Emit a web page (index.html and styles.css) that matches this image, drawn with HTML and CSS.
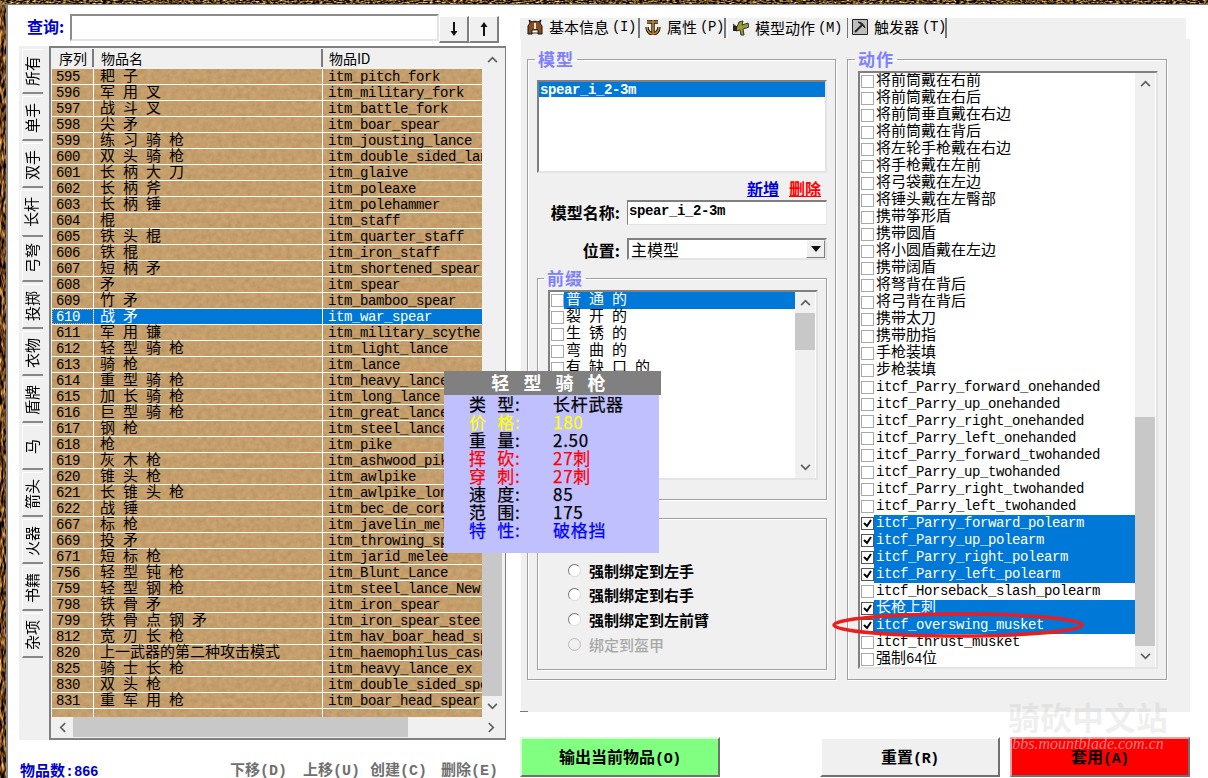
FILE: index.html
```html
<!DOCTYPE html>
<html lang="zh">
<head>
<meta charset="utf-8">
<title>物品编辑器</title>
<link rel="stylesheet" href="styles.css">
</head>
<body>
<div class="app">
  <div class="topstrip"></div>
  <div class="body">
    <div class="leftstrip"></div>
    <div class="leftcol">
      <div class="query">
        <label class="q-label">查询:</label>
        <div class="q-input"></div>
        <button class="q-btn"><svg viewBox="0 0 10 16"><path d="M5 1V11" class="a-l"/><path d="M1.5 10H8.5L5 15Z"/></svg></button>
        <button class="q-btn"><svg viewBox="0 0 10 16"><path d="M5 5V15" class="a-l"/><path d="M1.5 6H8.5L5 1Z"/></svg></button>
      </div>
      <div class="listarea">
        <div class="vtabs">
          <div class="vtab"><span>所有</span></div>
          <div class="vtab"><span>单手</span></div>
          <div class="vtab"><span>双手</span></div>
          <div class="vtab on"><span>长杆</span></div>
          <div class="vtab"><span>弓弩</span></div>
          <div class="vtab"><span>投掷</span></div>
          <div class="vtab"><span>衣物</span></div>
          <div class="vtab"><span>盾牌</span></div>
          <div class="vtab"><span>马</span></div>
          <div class="vtab"><span>箭头</span></div>
          <div class="vtab"><span>火器</span></div>
          <div class="vtab"><span>书籍</span></div>
          <div class="vtab"><span>杂项</span></div>
        </div>
        <div class="tbox">
          <div class="tmain">
            <div class="thead">
              <div class="th">序列</div><div class="th">物品名</div><div class="th">物品<span class="lat">ID</span></div>
            </div>
            <div class="rows">
              <div class="row"><i>595</i><b>耙 子</b><u>itm_pitch_fork</u></div>
              <div class="row"><i>596</i><b>军 用 叉</b><u>itm_military_fork</u></div>
              <div class="row"><i>597</i><b>战 斗 叉</b><u>itm_battle_fork</u></div>
              <div class="row"><i>598</i><b>尖 矛</b><u>itm_boar_spear</u></div>
              <div class="row"><i>599</i><b>练 习 骑 枪</b><u>itm_jousting_lance</u></div>
              <div class="row"><i>600</i><b>双 头 骑 枪</b><u>itm_double_sided_lance</u></div>
              <div class="row"><i>601</i><b>长 柄 大 刀</b><u>itm_glaive</u></div>
              <div class="row"><i>602</i><b>长 柄 斧</b><u>itm_poleaxe</u></div>
              <div class="row"><i>603</i><b>长 柄 锤</b><u>itm_polehammer</u></div>
              <div class="row"><i>604</i><b>棍</b><u>itm_staff</u></div>
              <div class="row"><i>605</i><b>铁 头 棍</b><u>itm_quarter_staff</u></div>
              <div class="row"><i>606</i><b>铁 棍</b><u>itm_iron_staff</u></div>
              <div class="row"><i>607</i><b>短 柄 矛</b><u>itm_shortened_spear</u></div>
              <div class="row"><i>608</i><b>矛</b><u>itm_spear</u></div>
              <div class="row"><i>609</i><b>竹 矛</b><u>itm_bamboo_spear</u></div>
              <div class="row sel"><i>610</i><b>战 矛</b><u>itm_war_spear</u></div>
              <div class="row"><i>611</i><b>军 用 镰</b><u>itm_military_scythe</u></div>
              <div class="row"><i>612</i><b>轻 型 骑 枪</b><u>itm_light_lance</u></div>
              <div class="row"><i>613</i><b>骑 枪</b><u>itm_lance</u></div>
              <div class="row"><i>614</i><b>重 型 骑 枪</b><u>itm_heavy_lance</u></div>
              <div class="row"><i>615</i><b>加 长 骑 枪</b><u>itm_long_lance</u></div>
              <div class="row"><i>616</i><b>巨 型 骑 枪</b><u>itm_great_lance</u></div>
              <div class="row"><i>617</i><b>钢 枪</b><u>itm_steel_lance</u></div>
              <div class="row"><i>618</i><b>枪</b><u>itm_pike</u></div>
              <div class="row"><i>619</i><b>灰 木 枪</b><u>itm_ashwood_pike</u></div>
              <div class="row"><i>620</i><b>锥 头 枪</b><u>itm_awlpike</u></div>
              <div class="row"><i>621</i><b>长 锥 头 枪</b><u>itm_awlpike_long</u></div>
              <div class="row"><i>622</i><b>战 锤</b><u>itm_bec_de_corbin</u></div>
              <div class="row"><i>667</i><b>标 枪</b><u>itm_javelin_melee</u></div>
              <div class="row"><i>669</i><b>投 矛</b><u>itm_throwing_spear</u></div>
              <div class="row"><i>671</i><b>短 标 枪</b><u>itm_jarid_melee</u></div>
              <div class="row"><i>756</i><b>轻 型 钝 枪</b><u>itm_Blunt_Lance</u></div>
              <div class="row"><i>759</i><b>轻 型 钢 枪</b><u>itm_steel_lance_New</u></div>
              <div class="row"><i>798</i><b>铁 骨 矛</b><u>itm_iron_spear</u></div>
              <div class="row"><i>799</i><b>铁 骨 点 钢 矛</b><u>itm_iron_spear_steel</u></div>
              <div class="row"><i>812</i><b>宽 刃 长 枪</b><u>itm_hav_boar_head_spear</u></div>
              <div class="row"><i>820</i><b>上一武器的第二种攻击模式</b><u>itm_haemophilus_case</u></div>
              <div class="row"><i>825</i><b>骑 士 长 枪</b><u>itm_heavy_lance_ex</u></div>
              <div class="row"><i>830</i><b>双 头 枪</b><u>itm_double_sided_spear</u></div>
              <div class="row"><i>831</i><b>重 军 用 枪</b><u>itm_boar_head_spear</u></div>
              <div class="row"><i></i><b></b><u></u></div>
            </div>
          </div>
          <div class="vbar vbar-items">
            <div class="sb-btn"><svg class="chev" viewBox="0 0 12 8"><path d="M1 7 6 2 11 7"/></svg></div>
            <div class="sb-space"></div>
            <div class="sb-thumb"></div>
            <div class="sb-btn"><svg class="chev" viewBox="0 0 12 8"><path d="M1 1 6 6 11 1"/></svg></div>
          </div>
          <div class="hbar">
            <div class="hb-btn"><svg class="chev-h" viewBox="0 0 8 12"><path d="M7 1 2 6 7 11"/></svg></div>
            <div class="hb-thumb"></div>
            <div class="hb-space"></div>
            <div class="hb-btn"><svg class="chev-h" viewBox="0 0 8 12"><path d="M1 1 6 6 1 11"/></svg></div>
          </div>
        </div>
      </div>
      <div class="status">
        <span class="count">物品数:<span class="lat">866</span></span>
        <span class="cmds">
          <span class="cmd">下移(D)</span><span class="cmd">上移(U)</span><span class="cmd">创建(C)</span><span class="cmd">删除(E)</span>
        </span>
      </div>
    </div>

    <div class="rightcol">
      <div class="tabbar">
        <div class="tab t1"><svg class="ico" viewBox="0 0 16 16"><path d="M1 15V7L3 4 2 1 5 3C6 2 10 2 11 3L14 1 13 4 15 7V15H11V11H5V15Z" fill="#8b4a1f" stroke="#111"/><path d="M7 4H9V10H7Z" fill="#e8e0d0"/><path d="M5 11H11V14H5Z" fill="#fff" stroke="#333"/></svg>基本信息<span class="lat">(I)</span></div>
        <div class="tab t2"><svg class="ico" viewBox="0 0 16 16"><path d="M2 3H13M8 1V14M2 8C2 13 6 15 8 15S14 13 14 8" fill="none" stroke="#111" stroke-width="3.4"/><path d="M2 3H13M8 1V14M2 8C2 13 6 15 8 15S14 13 14 8" fill="none" stroke="#c98a22" stroke-width="1.6"/></svg>属性<span class="lat">(P)</span></div>
        <div class="tab t3 on"><svg class="ico" viewBox="0 0 16 16"><path d="M0 4 4 7 6 2 10 1 9 5 15 3 16 7 10 9 11 15 8 15 7 10 3 11Z" fill="#9a9a30" stroke="#333"/><path d="M0 6H4V11H0Z" fill="#222"/></svg>模型动作<span class="lat">(M)</span></div>
        <div class="tab t4"><svg class="ico" viewBox="0 0 16 16"><path d="M.5.5H15.5V15.5H.5Z" fill="#bdbdbd" stroke="#222"/><path d="M3 13 10 6" fill="none" stroke="#222" stroke-width="2"/><path d="M6 3C9 3 12 5 13 9L10 6Z" fill="#333" stroke="#222"/></svg>触发器<span class="lat">(T)</span></div>
      </div>
      <div class="panel">
        <fieldset class="group g-model">
          <legend>模型</legend>
          <div class="models lat-wide"><div class="model-sel">spear_i_2-3m</div></div>
          <div class="links"><span class="add">新増</span><span class="del">删除</span></div>
          <div class="field f-name"><label>模型名称:</label><div class="f-input">spear_i_2-3m</div></div>
          <div class="field f-pos"><label>位置:</label><div class="f-select"><span>主模型</span><span class="dd"><svg viewBox="0 0 10 6"><path d="M0 0H10L5 6Z"/></svg></span></div></div>
          <fieldset class="group g-prefix">
            <legend>前缀</legend>
            <div class="checklist prefix-list">
              <div class="cl-rows">
                <div class="cl-row sel"><span class="box"></span><span class="t sp">普 通 的</span></div>
                <div class="cl-row"><span class="box"></span><span class="t sp">裂 开 的</span></div>
                <div class="cl-row"><span class="box"></span><span class="t sp">生 锈 的</span></div>
                <div class="cl-row"><span class="box"></span><span class="t sp">弯 曲 的</span></div>
                <div class="cl-row"><span class="box"></span><span class="t sp">有 缺 口 的</span></div>
              </div>
              <div class="vbar vbar-prefix">
                <div class="sb-btn"><svg class="chev" viewBox="0 0 12 8"><path d="M1 7 6 2 11 7"/></svg></div>
                <div class="sb-thumb"></div>
                <div class="sb-space"></div>
                <div class="sb-btn"><svg class="chev" viewBox="0 0 12 8"><path d="M1 1 6 6 11 1"/></svg></div>
              </div>
            </div>
          </fieldset>
          <fieldset class="group g-bind">
            <div class="radio"><span class="dot"></span>强制绑定到左手</div>
            <div class="radio"><span class="dot"></span>强制绑定到右手</div>
            <div class="radio"><span class="dot"></span>强制绑定到左前臂</div>
            <div class="radio off"><span class="dot"></span>绑定到盔甲</div>
          </fieldset>
        </fieldset>
        <fieldset class="group g-action">
          <legend>动作</legend>
          <div class="checklist action-list">
            <div class="cl-rows">
              <div class="cl-row"><span class="box"></span><span class="t">将前筒戴在右前</span></div>
              <div class="cl-row"><span class="box"></span><span class="t">将前筒戴在右后</span></div>
              <div class="cl-row"><span class="box"></span><span class="t">将前筒垂直戴在右边</span></div>
              <div class="cl-row"><span class="box"></span><span class="t">将前筒戴在背后</span></div>
              <div class="cl-row"><span class="box"></span><span class="t">将左轮手枪戴在右边</span></div>
              <div class="cl-row"><span class="box"></span><span class="t">将手枪戴在左前</span></div>
              <div class="cl-row"><span class="box"></span><span class="t">将弓袋戴在左边</span></div>
              <div class="cl-row"><span class="box"></span><span class="t">将锤头戴在左臀部</span></div>
              <div class="cl-row"><span class="box"></span><span class="t">携带筝形盾</span></div>
              <div class="cl-row"><span class="box"></span><span class="t">携带圆盾</span></div>
              <div class="cl-row"><span class="box"></span><span class="t">将小圆盾戴在左边</span></div>
              <div class="cl-row"><span class="box"></span><span class="t">携带阔盾</span></div>
              <div class="cl-row"><span class="box"></span><span class="t">将弩背在背后</span></div>
              <div class="cl-row"><span class="box"></span><span class="t">将弓背在背后</span></div>
              <div class="cl-row"><span class="box"></span><span class="t">携带太刀</span></div>
              <div class="cl-row"><span class="box"></span><span class="t">携带肋指</span></div>
              <div class="cl-row"><span class="box"></span><span class="t">手枪装填</span></div>
              <div class="cl-row"><span class="box"></span><span class="t">步枪装填</span></div>
              <div class="cl-row"><span class="box"></span><span class="t lat">itcf_Parry_forward_onehanded</span></div>
              <div class="cl-row"><span class="box"></span><span class="t lat">itcf_Parry_up_onehanded</span></div>
              <div class="cl-row"><span class="box"></span><span class="t lat">itcf_Parry_right_onehanded</span></div>
              <div class="cl-row"><span class="box"></span><span class="t lat">itcf_Parry_left_onehanded</span></div>
              <div class="cl-row"><span class="box"></span><span class="t lat">itcf_Parry_forward_twohanded</span></div>
              <div class="cl-row"><span class="box"></span><span class="t lat">itcf_Parry_up_twohanded</span></div>
              <div class="cl-row"><span class="box"></span><span class="t lat">itcf_Parry_right_twohanded</span></div>
              <div class="cl-row"><span class="box"></span><span class="t lat">itcf_Parry_left_twohanded</span></div>
              <div class="cl-row sel"><span class="box on"><svg viewBox="0 0 11 11"><path d="M2 5 5 8 9 2"/></svg></span><span class="t lat">itcf_Parry_forward_polearm</span></div>
              <div class="cl-row sel"><span class="box on"><svg viewBox="0 0 11 11"><path d="M2 5 5 8 9 2"/></svg></span><span class="t lat">itcf_Parry_up_polearm</span></div>
              <div class="cl-row sel"><span class="box on"><svg viewBox="0 0 11 11"><path d="M2 5 5 8 9 2"/></svg></span><span class="t lat">itcf_Parry_right_polearm</span></div>
              <div class="cl-row sel"><span class="box on"><svg viewBox="0 0 11 11"><path d="M2 5 5 8 9 2"/></svg></span><span class="t lat">itcf_Parry_left_polearm</span></div>
              <div class="cl-row"><span class="box"></span><span class="t lat">itcf_Horseback_slash_polearm</span></div>
              <div class="cl-row sel"><span class="box on"><svg viewBox="0 0 11 11"><path d="M2 5 5 8 9 2"/></svg></span><span class="t">长枪上刺</span></div>
              <div class="cl-row sel"><span class="box on"><svg viewBox="0 0 11 11"><path d="M2 5 5 8 9 2"/></svg></span><span class="t lat">itcf_overswing_musket</span></div>
              <div class="cl-row"><span class="box"></span><span class="t lat">itcf_thrust_musket</span></div>
              <div class="cl-row"><span class="box"></span><span class="t">强制<span class="lat">64</span>位</span></div>
            </div>
            <div class="vbar vbar-action">
              <div class="sb-btn"><svg class="chev" viewBox="0 0 12 8"><path d="M1 7 6 2 11 7"/></svg></div>
              <div class="sb-space"></div>
              <div class="sb-thumb"></div>
              <div class="sb-btn"><svg class="chev" viewBox="0 0 12 8"><path d="M1 1 6 6 11 1"/></svg></div>
            </div>
          </div>
        </fieldset>
      </div>
      <div class="actions">
        <button class="act green">输出当前物品<span class="lat">(O)</span></button>
        <button class="act plain">重置<span class="lat">(R)</span></button>
        <button class="act red">套用<span class="lat">(A)</span></button>
      </div>
    </div>
  </div>

  <div class="tip">
    <div class="tip-head">轻 型 骑 枪</div>
    <div class="tip-body">
      <div class="tr"><span class="k">类 型:</span><span>长杆武器</span></div>
      <div class="tr yel"><span class="k">价 格:</span><span>180</span></div>
      <div class="tr"><span class="k">重 量:</span><span>2.50</span></div>
      <div class="tr rd"><span class="k">挥 砍:</span><span>27刺</span></div>
      <div class="tr rd"><span class="k">穿 刺:</span><span>27刺</span></div>
      <div class="tr"><span class="k">速 度:</span><span>85</span></div>
      <div class="tr"><span class="k">范 围:</span><span>175</span></div>
      <div class="tr blu"><span class="k">特 性:</span><span>破格挡</span></div>
    </div>
  </div>

  <svg class="ring" viewBox="0 0 260 36"><ellipse cx="130" cy="18" rx="124" ry="11"/></svg>

  <div class="mark"><div class="mark-cn">骑砍中文站</div><div class="mark-en">bbs.mountblade.com.cn</div></div>
</div>
</body>
</html>
```

FILE: styles.css
```css
* { box-sizing: border-box; }
html, body { margin: 0; padding: 0; background: #fff; }
body { font-family: "Liberation Mono", "Noto Sans CJK SC", monospace; font-size: 15px; color: #000; }
button { font: inherit; padding: 0; margin: 0; }
i, b, u { font-style: normal; font-weight: normal; text-decoration: none; }

.app { position: relative; width: 1208px; height: 778px; overflow: hidden; display: flex; flex-direction: column; background: #fff; }
.lat { font-size: 14px; letter-spacing: -.4px; }

/* textured window frame */
.topstrip { height: 5px; flex: none; border-bottom: 1px solid #7f7f7f;
  background: #5b4a2c url("data:image/svg+xml,%3Csvg xmlns='http://www.w3.org/2000/svg' width='1208' height='8'%3E%3Cfilter id='f' color-interpolation-filters='sRGB'%3E%3CfeTurbulence type='fractalNoise' baseFrequency='.3 .8' numOctaves='2'/%3E%3CfeColorMatrix values='2.2 0 0 0 -.75 1.9 0 0 0 -.7 1.3 0 0 0 -.55 0 0 0 0 1'/%3E%3C/filter%3E%3Crect width='100%25' height='100%25' filter='url(%23f)'/%3E%3C/svg%3E"); }
.body { flex: 1; display: flex; min-height: 0; }
.leftstrip { width: 8px; flex: none; border-right: 2px solid #8a8a8a;
  background: #4c3a20 url("data:image/svg+xml,%3Csvg xmlns='http://www.w3.org/2000/svg' width='8' height='778'%3E%3Cfilter id='f' color-interpolation-filters='sRGB'%3E%3CfeTurbulence type='fractalNoise' baseFrequency='.5 .12' numOctaves='2'/%3E%3CfeColorMatrix values='2 0 0 0 -.6 1.6 0 0 0 -.55 1 0 0 0 -.4 0 0 0 0 1'/%3E%3C/filter%3E%3Crect width='100%25' height='100%25' filter='url(%23f)'/%3E%3C/svg%3E"); }

/* left column */
.leftcol { width: 512px; flex: none; display: flex; flex-direction: column; padding: 9px 0 0 11px; }
.query { display: flex; height: 29px; align-items: flex-start; padding-left: 8px; }
.q-label { width: 43px; line-height: 25px; color: #0000d0; font-weight: bold; font-size: 16px; font-family: "Noto Sans CJK SC", sans-serif; white-space: nowrap; }
.q-input { width: 369px; height: 27px; background: #fff; border: 2px solid; border-color: #8c8c8c #e4e4e4 #e4e4e4 #8c8c8c; }
.q-btn { width: 30px; height: 27px; margin-top: 2px; background: #f0f0f0; border: 1px solid; border-color: #fff #808080 #808080 #fff; border-bottom-width: 2px; border-right-width: 2px; display: grid; place-items: center; }
.q-btn svg { width: 10px; height: 16px; fill: #111; }
.q-btn .a-l { stroke: #111; stroke-width: 2; fill: none; }

.listarea { display: flex; margin-top: 3px; height: 694px; flex: none; }
.vtabs { width: 30px; flex: none; background: #f0f0f0; display: flex; flex-direction: column; gap: 2px; padding: 3px 0 0 3px; }
.vtab { width: 21px; height: 45px; flex: none; padding-right: 2px; background: #f0f0f0; border-left: 1px solid #fff; border-top: 1px solid #fff; border-bottom: 2px solid #888; display: flex; align-items: center; justify-content: center; }
.vtab.on { width: 24px; margin-left: -2px; border-bottom-color: #f0f0f0; border-top-color: #fff; padding-right: 3px; }
.vtab span { writing-mode: vertical-rl; text-orientation: sideways; transform: rotate(180deg); font-family: "Noto Sans CJK SC", sans-serif; font-size: 15px; line-height: 20px; }
.vtab.on + .vtab { border-top: 2px solid #888; margin-top: -2px; height: 47px; }

.tbox { width: 457px; flex: none; background: #f0f0f0; display: grid; grid-template-columns: 430px 20px; grid-template-rows: 668px 20px; padding: 1px 0 0 1px; border: 2px solid #808080; border-width: 2px 1px 2px 2px; align-content: start; }
.tmain { min-width: 0; overflow: hidden; }
.thead { display: grid; grid-template-columns: 42px 229px 159px; height: 20px; }
.th { height: 18px; line-height: 18px; padding-left: 7px; background: #f0f0f0; border-right: 2px solid #7c7c7c; font-size: 14px; font-family: "Noto Sans CJK SC", sans-serif; white-space: nowrap; border-bottom: 0; }
.th:last-child { border-right: 0; padding-left: 6px; }
.rows { height: 648px; overflow: hidden;
  background: #c49f6b url("data:image/svg+xml,%3Csvg xmlns='http://www.w3.org/2000/svg' width='430' height='648'%3E%3Cfilter id='f' color-interpolation-filters='sRGB'%3E%3CfeTurbulence type='fractalNoise' baseFrequency='.2' numOctaves='3'/%3E%3CfeColorMatrix values='.12 0 0 0 .71 .12 0 0 0 .56 .1 0 0 0 .37 0 0 0 0 1'/%3E%3C/filter%3E%3Crect width='100%25' height='100%25' filter='url(%23f)'/%3E%3C/svg%3E"); }
.row { display: grid; grid-template-columns: 42px 229px 159px; height: 16px; border-bottom: 1px solid #fff; }
.row > * { display: block; height: 15px; padding-top: 1px; line-height: 15px; white-space: nowrap; border-right: 1px solid #fff; }
.row i { padding-left: 4px; font-size: 14px; letter-spacing: -.4px; }
.row b { padding-left: 6px; font-size: 15px; word-spacing: -1px; }
.row u { padding-left: 5px; font-size: 14px; letter-spacing: -.4px; border-right: 0; }
.row.sel { background: #0078d7; color: #fff; }
.row.sel i { outline: 1px dotted #e89a3c; outline-offset: -1px; }

/* scrollbars */
.vbar { display: flex; flex-direction: column; width: 20px; background: #f0f0f0; }
.sb-btn { height: 21px; flex: none; display: grid; place-items: center; }
.sb-thumb { background: #c8c8c8; }
.sb-space { flex: none; }
.chev { width: 11px; height: 7px; fill: none; stroke: #606060; stroke-width: 2; }
.chev-h { width: 7px; height: 11px; fill: none; stroke: #606060; stroke-width: 2; }
.vbar-items .sb-space { height: 380px; }
.vbar-items .sb-thumb { height: 246px; }
.vbar-action .sb-space { height: 323px; }
.vbar-action .sb-thumb { height: 230px; }
.vbar-prefix .sb-thumb { height: 37px; }
.vbar-prefix .sb-space { flex: 1; }
.hbar { grid-column: 1 / 3; height: 20px; display: flex; background: #f0f0f0; }
.hb-btn { width: 21px; display: grid; place-items: center; flex: none; }
.hb-thumb { width: 335px; background: #c8c8c8; flex: none; }
.hb-space { flex: 1; }

.status { display: flex; margin-top: 22px; padding-left: 1px; height: 20px; flex: none; align-items: center; line-height: 20px; font-family: "Liberation Mono", "Noto Sans CJK SC", monospace; }
.count { width: 210px; color: #0000d0; font-weight: bold; font-size: 15px; white-space: nowrap; }
.cmds { display: flex; color: #707070; font-size: 15px; font-weight: bold; }
.cmd { white-space: nowrap; }
.cmd:nth-child(1) { width: 73px; }
.cmd:nth-child(2) { width: 67px; }
.cmd:nth-child(3) { width: 71px; }

/* right column */
.rightcol { flex: 1; display: flex; flex-direction: column; padding-top: 13px; min-width: 0; }
.tabbar { width: 666px; height: 21px; background: #f0f0f0; display: flex; padding-left: 2px; flex: none; }
.tab { height: 20px; display: flex; align-items: center; gap: 3px; background: #f0f0f0; border-right: 2px solid #777; white-space: nowrap; padding: 0 0 2px 5px; line-height: 18px; font-family: "Noto Sans CJK SC", "Liberation Mono", sans-serif; font-size: 15px; }
.tab .lat { font-family: "Liberation Mono", monospace; }
.ico { width: 16px; height: 16px; flex: none; margin-right: 3px; }
.t1 { width: 118px; }
.t2 { width: 86px; }
.t3 { width: 120px; margin-left: 1px; height: 22px; margin-top: -1px; border-right: 0; background: #f0f0f0; border-top: 1px solid #fff; border-left: 1px solid #fff; position: relative; }
.t4 { width: 100px; padding-left: 4px; border-left: 1px solid #777; }
.panel { position: relative; width: 670px; height: 673px; flex: none; background: #f0f0f0; display: flex; align-items: flex-start; gap: 11px; padding: 11px 0 0 6px; border-left: 1px solid #fff; }
.panel::after { content: ""; position: absolute; left: -1px; bottom: 0; width: 8px; height: 1px; background: #777; }

.group { margin: 0; padding: 0; min-width: 0; border: 1px solid #a0a0a0; box-shadow: 1px 1px 0 #fff, inset 1px 1px 0 #fff; }
.group legend { padding: 0 3px; margin-left: -2px; height: 18px; line-height: 18px; color: #8080ff; font-weight: bold; font-size: 17px; font-family: "Noto Sans CJK SC", sans-serif; letter-spacing: 1px; }

.g-model { width: 309px; height: 630px; padding: 12px 0 0 9px; }
.models { width: 290px; height: 93px; background: #fff; border: 2px solid; border-color: #808080 #e4e4e4 #e4e4e4 #808080; font-size: 14px; letter-spacing: -.4px; }
.model-sel { height: 15px; line-height: 16px; padding-left: 1px; background: #0078d7; color: #fff; font-weight: bold; }
.links { height: 27px; width: 284px; display: flex; justify-content: flex-end; gap: 10px; align-items: center; padding-top: 3px; font-family: "Noto Sans CJK SC", sans-serif; font-weight: bold; font-size: 16px; }
.add { color: #0000e0; text-decoration: underline; }
.del { color: #f00; text-decoration: underline; }
.field { display: flex; width: 290px; }
.field label { width: 85px; padding-right: 2px; text-align: right; white-space: nowrap; font-family: "Noto Sans CJK SC", sans-serif; font-weight: bold; font-size: 16px; line-height: 24px; flex: none; }
.f-name { height: 25px; }
.f-input { flex: 1; margin-left: 5px; height: 25px; background: #fff; border: 1px solid; border-color: #808080 #e4e4e4 #e4e4e4 #808080; border-top-width: 2px; font-size: 14px; letter-spacing: -.4px; font-weight: bold; line-height: 19px; padding-left: 1px; }
.f-pos { margin-top: 13px; height: 22px; }
.f-select { flex: 1; margin-left: 5px; height: 22px; background: #fff; border: 2px solid; border-color: #808080 #e4e4e4 #e4e4e4 #808080; display: flex; justify-content: space-between; padding-left: 2px; line-height: 18px; font-family: "Noto Sans CJK SC", sans-serif; font-size: 16px; }
.dd { width: 19px; height: 18px; background: #f0f0f0; border: 1px solid; border-color: #fff #808080 #808080 #fff; display: grid; place-items: center; }
.dd svg { width: 10px; height: 6px; fill: #111; }

.g-prefix { width: 290px; height: 231px; margin-top: 9px; padding: 3px 0 0 10px; position: relative; }
.g-prefix legend { margin-left: -4px; }
.checklist { display: flex; background: #fff; border: 2px solid; border-color: #808080 #e4e4e4 #e4e4e4 #808080; overflow: hidden; }
.prefix-list { width: 270px; height: 190px; }
.cl-rows { flex: 1; min-width: 0; padding-left: 1px; overflow: hidden; }
.cl-row { display: flex; height: 17px; align-items: center; white-space: nowrap; }
.box { width: 13px; height: 13px; flex: none; background: #fff; border: 1px solid #a8a8a8; display: block; }
.box svg { display: block; width: 11px; height: 11px; fill: none; stroke: #000; stroke-width: 2; }
.box.on { border-color: #555; }
.t { flex: 1; height: 17px; line-height: 17px; padding-left: 2px; font-size: 15px; }
.t.lat { font-size: 14px; letter-spacing: -.4px; }
.t.sp { word-spacing: -1px; }
.cl-row.sel .t { background: #0078d7; color: #fff; }
.prefix-list .vbar { width: 20px; margin-right: 1px; }

.g-bind { width: 290px; height: 152px; margin-top: 18px; padding: 40px 0 0 30px; position: relative; }
.radio { height: 25px; display: flex; align-items: center; font-family: "Noto Sans CJK SC", sans-serif; font-weight: bold; font-size: 15px; }
.radio:first-child { height: 23px; }
.radio.off { color: #a8a8a8; font-weight: 500; }
.dot { width: 13px; height: 13px; border-radius: 50%; margin-right: 8px; background: #fff; border: 1px solid #777; border-right-color: #ddd; border-bottom-color: #ddd; }
.radio.off .dot { background: #f0f0f0; border-color: #bbb; }

.g-action { width: 320px; height: 630px; padding: 3px 0 0 10px; }
.g-action legend { margin-left: -3px; }
.action-list { width: 300px; height: 598px; }
.action-list .vbar { width: 20px; flex: none; margin-right: 1px; }

/* bottom buttons */
.actions { display: flex; margin-top: 25px; flex: none; }
.act { height: 40px; border: 2px solid; padding-bottom: 3px; font-family: "Noto Sans CJK SC", sans-serif; font-weight: bold; font-size: 16px; }
.act .lat { font-family: "Liberation Mono", monospace; font-size: 15px; }
.green { width: 200px; background: #80ff80; border-color: #d8ffd8 #707070 #707070 #d8ffd8; }
.plain { width: 180px; margin-left: 100px; background: #f0f0f0; border-color: #fff #707070 #707070 #fff; }
.red { width: 180px; margin-left: 10px; background: #f00; border-color: #f5a0a0 #707070 #707070 #f5a0a0; }

/* floating pieces */
.tip { position: absolute; left: 444px; top: 371px; width: 217px; font-family: "Noto Sans CJK SC", sans-serif; }
.tip-head { height: 24px; line-height: 23px; background: #808080; color: #fff; font-size: 18px; font-weight: bold; text-align: center; padding-right: 8px; word-spacing: 10px; }
.tip-body { width: 215px; height: 158px; background: #c0c0ff; padding: 0 0 0 25px; }
.tr { display: grid; grid-template-columns: 84px 1fr; height: 18px; line-height: 18px; font-size: 17px; white-space: nowrap; letter-spacing: .7px; -webkit-text-stroke: .25px currentColor; }
.tr .k { word-spacing: 6px; }
.yel { color: #ffff00; }
.rd { color: #ff0000; }
.blu { color: #0000ff; }

.ring { position: absolute; left: 828px; top: 607px; width: 260px; height: 36px; fill: none; stroke: #ee1c1c; stroke-width: 3.5; }

.mark { position: absolute; left: 1003px; top: 696px; width: 170px; pointer-events: none; text-align: center; white-space: nowrap; }
.mark-cn { font-family: "Noto Sans CJK SC", sans-serif; font-size: 32px; line-height: 40px; font-weight: bold; color: rgba(170,170,170,.2); }
.mark-en { font-family: "Liberation Serif", serif; font-style: italic; font-size: 16px; line-height: 16px; color: rgba(215,215,215,.6); }
```
